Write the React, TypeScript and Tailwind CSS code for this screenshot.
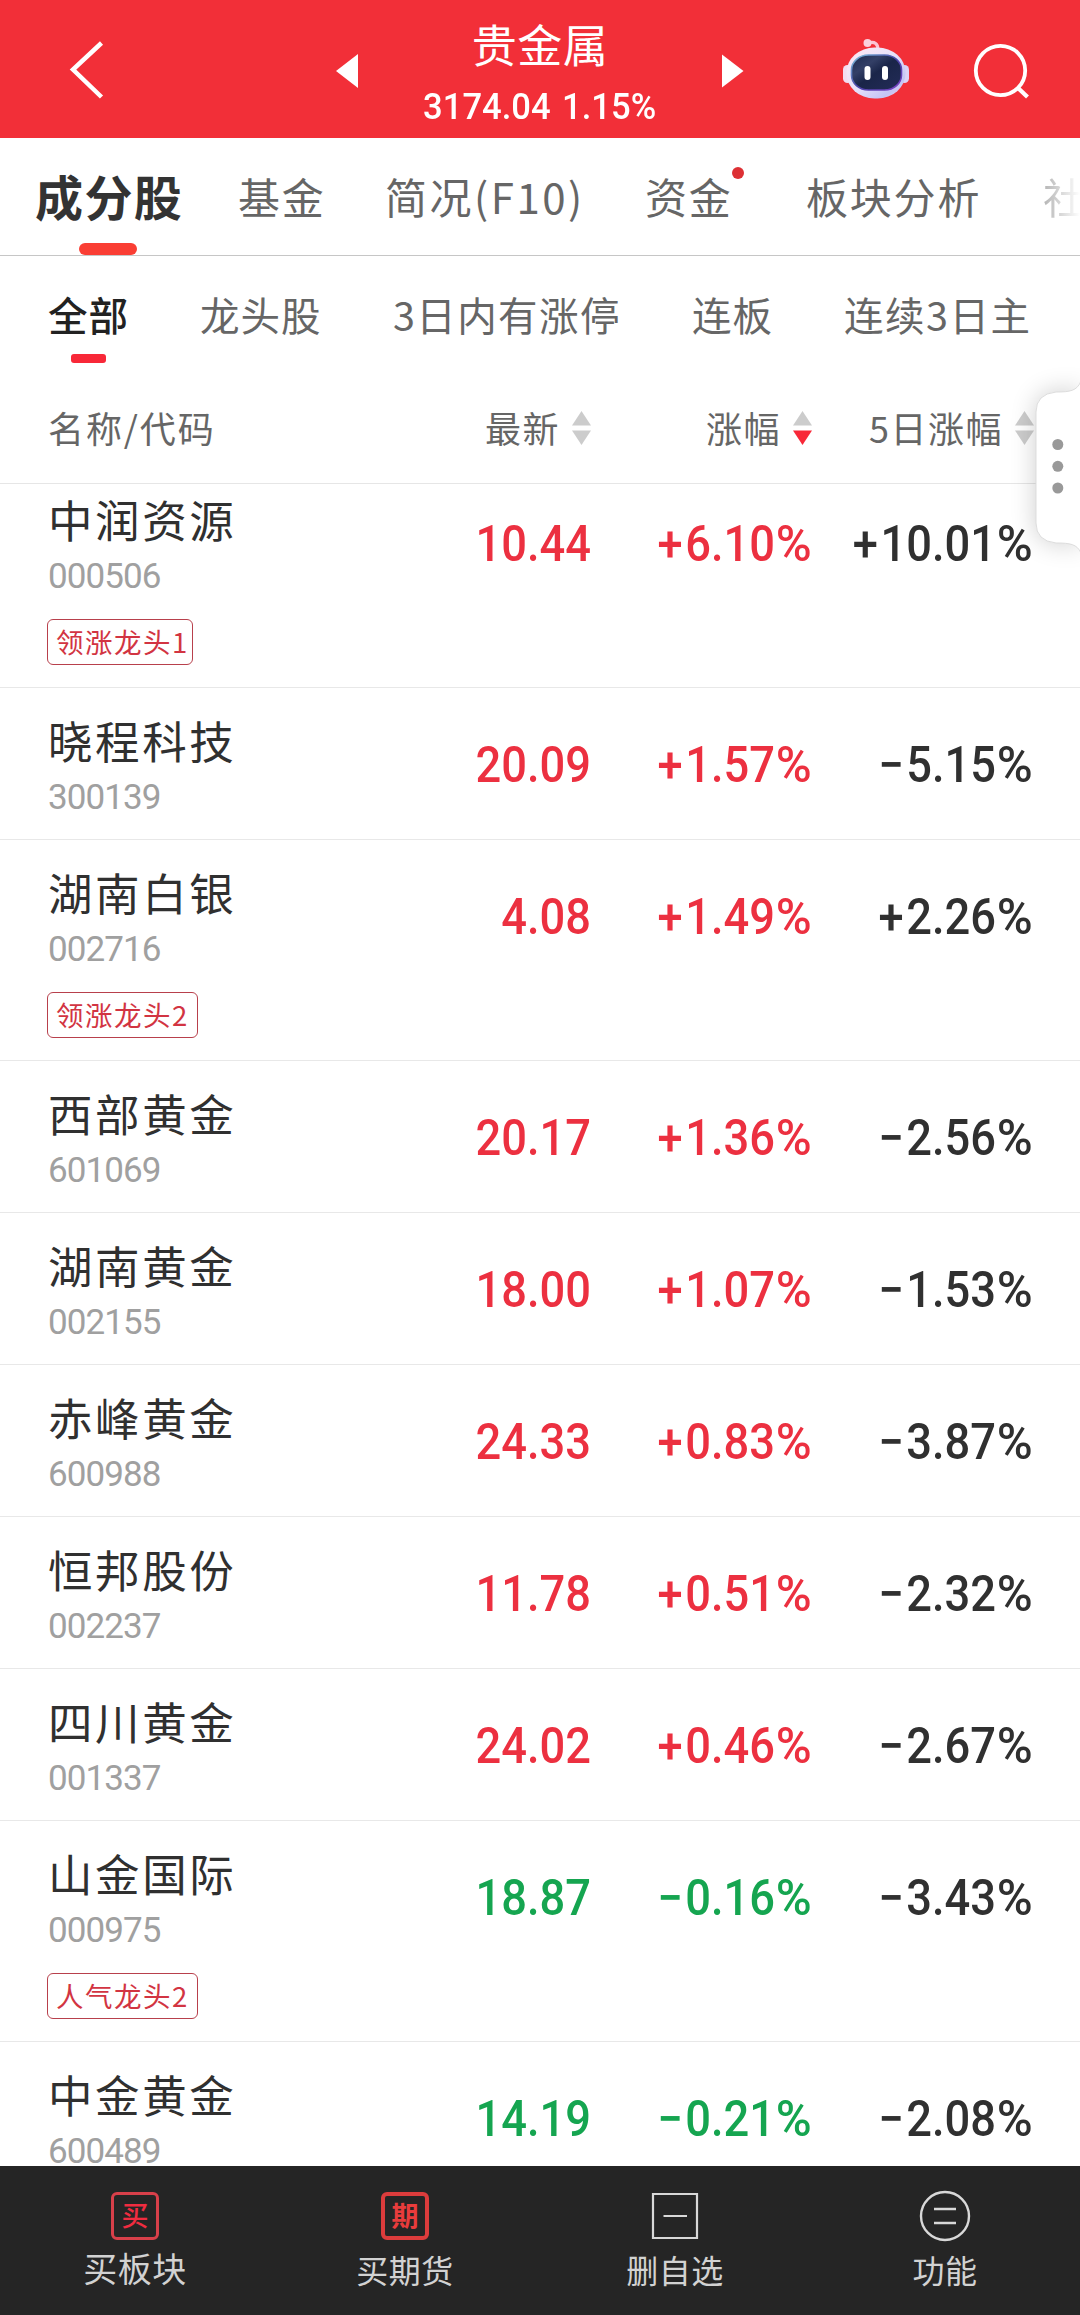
import React from 'react';

type Tone = 'up' | 'down';

interface Stock {
  name: string;
  code: string;
  price: string;
  change: string;
  fiveDay: string;
  tone: Tone;
  tag?: string;
}

const STOCKS: Stock[] = [
  { name: '中润资源', code: '000506', price: '10.44', change: '+6.10%', fiveDay: '+10.01%', tone: 'up', tag: '领涨龙头1' },
  { name: '晓程科技', code: '300139', price: '20.09', change: '+1.57%', fiveDay: '−5.15%', tone: 'up' },
  { name: '湖南白银', code: '002716', price: '4.08', change: '+1.49%', fiveDay: '+2.26%', tone: 'up', tag: '领涨龙头2' },
  { name: '西部黄金', code: '601069', price: '20.17', change: '+1.36%', fiveDay: '−2.56%', tone: 'up' },
  { name: '湖南黄金', code: '002155', price: '18.00', change: '+1.07%', fiveDay: '−1.53%', tone: 'up' },
  { name: '赤峰黄金', code: '600988', price: '24.33', change: '+0.83%', fiveDay: '−3.87%', tone: 'up' },
  { name: '恒邦股份', code: '002237', price: '11.78', change: '+0.51%', fiveDay: '−2.32%', tone: 'up' },
  { name: '四川黄金', code: '001337', price: '24.02', change: '+0.46%', fiveDay: '−2.67%', tone: 'up' },
  { name: '山金国际', code: '000975', price: '18.87', change: '−0.16%', fiveDay: '−3.43%', tone: 'down', tag: '人气龙头2' },
  { name: '中金黄金', code: '600489', price: '14.19', change: '−0.21%', fiveDay: '−2.08%', tone: 'down' },
];

const NUM = "font-['Roboto',sans-serif]";

function Robot() {
  return (
    <svg width="68" height="64" viewBox="0 0 68 64" className="block">
      <defs>
        <linearGradient id="shell" x1="0" y1="0" x2="1" y2="1">
          <stop offset="0" stopColor="#ffe9f2" />
          <stop offset="0.5" stopColor="#e6e0fa" />
          <stop offset="0.8" stopColor="#c3c4f5" />
          <stop offset="1" stopColor="#f6d3e6" />
        </linearGradient>
        <linearGradient id="visor" x1="0" y1="0" x2="1" y2="1">
          <stop offset="0" stopColor="#1d2c50" />
          <stop offset="0.3" stopColor="#333f66" />
          <stop offset="0.5" stopColor="#1a2549" />
          <stop offset="1" stopColor="#232c58" />
        </linearGradient>
        <linearGradient id="rim" x1="0" y1="0" x2="1" y2="1">
          <stop offset="0" stopColor="#7fc4dd" />
          <stop offset="0.5" stopColor="#4a45a8" />
          <stop offset="1" stopColor="#7a3fc4" />
        </linearGradient>
      </defs>
      <path d="M26 5 C33 3 36 6 36 12" fill="none" stroke="#fbc3d3" strokeWidth="3.2" />
      <circle cx="25.5" cy="5" r="4" fill="#fbd0dd" />
      <rect x="1" y="27" width="9" height="18" rx="4.5" fill="#f3dcf0" />
      <rect x="58" y="27" width="9" height="18" rx="4.5" fill="#dcd2f6" />
      <rect x="4.500" y="9.500" width="59" height="51" rx="28" ry="25" fill="url(#shell)" />
      <rect x="9.500" y="17" width="50" height="35" rx="17" ry="15" fill="url(#visor)" stroke="url(#rim)" strokeWidth="1.600" />
      <rect x="22.500" y="28" width="6" height="14" rx="3" fill="#fff" />
      <rect x="40" y="28" width="6" height="14" rx="3" fill="#fff" />
    </svg>
  );
}

function Header() {
  return (
    <header className="flex h-[138px] shrink-0 items-start bg-[#f22f38] text-white">
      <svg width="70" height="138" viewBox="50 0 70 138" className="ml-[50px] block">
        <path d="M101.500 43 L73 69.500 L101.500 97" fill="none" stroke="#fff" strokeWidth="4.500" />
      </svg>
      <svg width="24" height="36" viewBox="0 0 24 36" className="mt-[53px] ml-[215px] block">
        <path d="M23 1 L1 18 L23 35 Z" fill="#fff" />
      </svg>
      <div className="flex w-[362px] flex-col items-center">
        <div className="mt-[14px] h-[60px] text-[45px] leading-[60px] tracking-[0.500px]">贵金属</div>
        <div className={`${NUM} mt-[12px] h-[42px] scale-x-[0.935] text-[37px] leading-[42px] font-medium whitespace-pre [word-spacing:3px]`}>3174.04 1.15%</div>
      </div>
      <svg width="24" height="36" viewBox="0 0 24 36" className="mt-[53px] block">
        <path d="M1 1.500 L22.500 18 L1 34.500 Z" fill="#fff" />
      </svg>
      <div className="mt-[38px] ml-[97px]">
        <Robot />
      </div>
      <svg width="60" height="60" viewBox="0 0 60 60" className="mt-[40px] ml-[63px] block">
        <circle cx="27.500" cy="30.500" r="24.700" fill="none" stroke="#fff" strokeWidth="3.800" />
        <path d="M44 47 L54.500 57" stroke="#fff" strokeWidth="4.200" />
      </svg>
    </header>
  );
}

function Tabs() {
  return (
    <nav className="relative flex h-[118px] shrink-0 overflow-hidden border-b border-[#c6c6c6] text-[42px] leading-[64px] tracking-[1.800px] whitespace-nowrap text-[#666] [&>*]:shrink-0">
      <div className="relative mt-[25px] ml-[35px] w-[148px] text-[48px] font-bold tracking-[1.400px] text-[#333]">
        成分股
        <span className="absolute top-[80px] left-[44px] h-[12px] w-[58px] rounded-full bg-[#fa3e34]" />
      </div>
      <div className="mt-[26px] ml-[55px] w-[90px]">基金</div>
      <div className="mt-[26px] ml-[57px] w-[202px] tracking-[2.500px]">简况(F10)</div>
      <div className="relative mt-[26px] ml-[58px] w-[90px]">
        资金
        <span className="absolute top-[3px] left-[87px] size-[12px] rounded-full bg-[#dd3034]" />
      </div>
      <div className="mt-[26px] ml-[71px] w-[176px]">板块分析</div>
      <div className="mt-[26px] ml-[61px] w-[46px] bg-gradient-to-r from-[#b4b4b4] to-white to-80% bg-clip-text text-transparent">社</div>
    </nav>
  );
}

function Filters() {
  return (
    <div className="flex h-[118px] shrink-0 text-[39.500px] leading-[56px] tracking-[1px] whitespace-nowrap text-[#666]">
      <div className="relative mt-[30px] ml-[48px] w-[84px] font-medium text-[#222]">
        全部
        <span className="absolute top-[68px] left-[23px] h-[9px] w-[35px] rounded-[3px] bg-[#f82838]" />
      </div>
      <div className="mt-[30px] ml-[68px] w-[124px]">龙头股</div>
      <div className="mt-[30px] ml-[69px] w-[230px] tracking-[1.400px]">3日内有涨停</div>
      <div className="mt-[30px] ml-[69px] w-[84px]">连板</div>
      <div className="mt-[30px] ml-[68px] tracking-[1.500px]">连续3日主</div>
    </div>
  );
}

function SortArrows({ active }: { active?: boolean }) {
  return (
    <svg width="19" height="34" viewBox="0 0 19 34" className="ml-[12px] block">
      <path d="M9.500 0 L19 14.500 H0 Z" fill="#ccc" />
      <path d="M0 19.500 H19 L9.500 34 Z" fill={active ? '#f82838' : '#ccc'} />
    </svg>
  );
}

function HeadCell({ label, active }: { label: string; active?: boolean }) {
  return (
    <div className="flex items-center justify-end">
      <span className="-mt-[2px]">{label}</span>
      <SortArrows active={active} />
    </div>
  );
}

function ColumnHeads() {
  return (
    <div className="flex h-[110px] shrink-0 items-start border-b border-[#e6e6e6] pt-[28px] text-[36px] leading-[52px] tracking-[1.500px] whitespace-nowrap text-[#666]">
      <div className="flex h-[52px] w-[591px] items-center justify-between pl-[48px]">
        <span className="-mt-[2px] tracking-[1.900px]">名称/代码</span>
        <HeadCell label="最新" />
      </div>
      <div className="flex h-[52px] w-[221px] items-center justify-end">
        <HeadCell label="涨幅" active />
      </div>
      <div className="flex h-[52px] w-[222px] items-center justify-end">
        <HeadCell label="5日涨幅" />
      </div>
    </div>
  );
}

function Figure({ value, color }: { value: string; color: string }) {
  const signed = /^[+−]/.test(value);
  const percent = value.endsWith('%');
  const digits = value.replace(/[+−%]/g, '');
  return (
    <div className={`${NUM} mt-[47px] h-[60px] w-[221px] origin-right scale-x-[0.905] text-right text-[50px] leading-[60px] font-medium tracking-normal whitespace-nowrap ${color}`}>
      {signed && <span className="mr-[3px]">{value[0]}</span>}
      {digits}
      {percent && <span className="ml-[4px] inline-block origin-right scale-x-[1.080]">%</span>}
    </div>
  );
}

function Row({ stock }: { stock: Stock }) {
  const color = stock.tone === 'up' ? 'text-[#ec3040]' : 'text-[#15a550]';
  return (
    <div className={`${stock.tag ? 'h-[221px]' : 'h-[152px]'} flex shrink-0 border-b border-[#e8e8e8]`}>
      <div className="w-[370px] pl-[48px]">
        <div className="mt-[22px] h-[60px] text-[44.500px] leading-[60px] tracking-[2.600px] text-[#303030]">{stock.name}</div>
        <div className={`${NUM} mt-[8px] h-[40px] text-[35px] leading-[40px] tracking-[-0.900px] text-[#a0a0a0]`}>{stock.code}</div>
        {stock.tag && (
          <div
            className={`${stock.tag.endsWith('1') ? 'w-[146px]' : 'w-[151px]'} mt-[22px] -ml-px flex h-[46px] items-center rounded-[6px] border border-[#b8404c] pl-[8px] text-[27.500px] leading-[44px] tracking-[1.500px] whitespace-nowrap text-[#d23442]`}
          >
            <span className="-mt-[3px]">{stock.tag}</span>
          </div>
        )}
      </div>
      <Figure value={stock.price} color={color} />
      <Figure value={stock.change} color={color} />
      <Figure value={stock.fiveDay} color="text-[#303030]" />
    </div>
  );
}

function SideHandle() {
  return (
    <svg width="104" height="260" viewBox="976 340 104 260" className="absolute top-[340px] right-0 block">
      <defs>
        <filter id="soft" x="-80%" y="-40%" width="260%" height="180%">
          <feGaussianBlur stdDeviation="13" />
        </filter>
      </defs>
      <path d="M1079 385 C1077 391 1070 392 1056 392 Q1036 394 1036 412 V523 Q1036 541 1056 543 C1070 543 1077 544 1079 550 Z" fill="#000" opacity="0.2" filter="url(#soft)" />
      <path d="M1081 381 C1077 391 1070 392 1056 392 Q1036 394 1036 412 V523 Q1036 541 1056 543 C1070 543 1077 544 1081 553 Z" fill="#fff" stroke="#ddd" strokeWidth="1" />
      <circle cx="1057.800" cy="444.500" r="5.500" fill="#999" />
      <circle cx="1057.800" cy="466.300" r="5.500" fill="#999" />
      <circle cx="1057.800" cy="488" r="5.500" fill="#999" />
    </svg>
  );
}

function BottomBar() {
  const item = 'flex w-[270px] flex-col items-center pt-[25px]';
  return (
    <footer className="flex h-[149px] shrink-0 bg-[#252525] text-[32px] leading-[44px] tracking-[0.500px] text-[#d2d2d2]">
      <div className={item}>
        <div className="mt-[1px] flex size-[48px] items-center justify-center rounded-[6px] border-3 border-[#d8404a] text-[27px] leading-[40px] font-medium tracking-normal text-[#f02c40]">
          <span className="-mt-[3px]">买</span>
        </div>
        <div className="mt-[6px] text-[34px]">买板块</div>
      </div>
      <div className={item}>
        <div className="mt-[1px] flex size-[48px] items-center justify-center rounded-[6px] border-4 border-[#dc3c3c] text-[27px] leading-[40px] font-bold tracking-normal text-[#e83c3c]">
          <span className="-mt-[3px]">期</span>
        </div>
        <div className="mt-[7px]">买期货</div>
      </div>
      <div className={item}>
        <svg width="50" height="50" viewBox="0 0 50 50" className="block">
          <path d="M3 3 H47 V47 H3 Z M13.500 25 H37" fill="none" stroke="#d8d8d8" strokeWidth="2.200" />
        </svg>
        <div className="mt-[6px]">删自选</div>
      </div>
      <div className={item}>
        <svg width="52" height="50" viewBox="0 0 52 50" className="block overflow-visible">
          <circle cx="26" cy="25" r="24" fill="none" stroke="#d8d8d8" strokeWidth="2.400" />
          <path d="M15 18 H37 M15 32 H37" stroke="#d8d8d8" strokeWidth="2.600" />
        </svg>
        <div className="mt-[6px]">功能</div>
      </div>
    </footer>
  );
}

export default function App() {
  return (
    <div className="relative flex h-[2315px] w-[1080px] flex-col overflow-hidden bg-white font-['Noto_Sans_CJK_SC',sans-serif]">
      <Header />
      <Tabs />
      <Filters />
      <ColumnHeads />
      <main className="min-h-0 flex-1 overflow-hidden">
        <div className="-mt-[17px] flex flex-col">
          {STOCKS.map((s) => (
            <Row key={s.code} stock={s} />
          ))}
        </div>
      </main>
      <BottomBar />
      <SideHandle />
    </div>
  );
}
